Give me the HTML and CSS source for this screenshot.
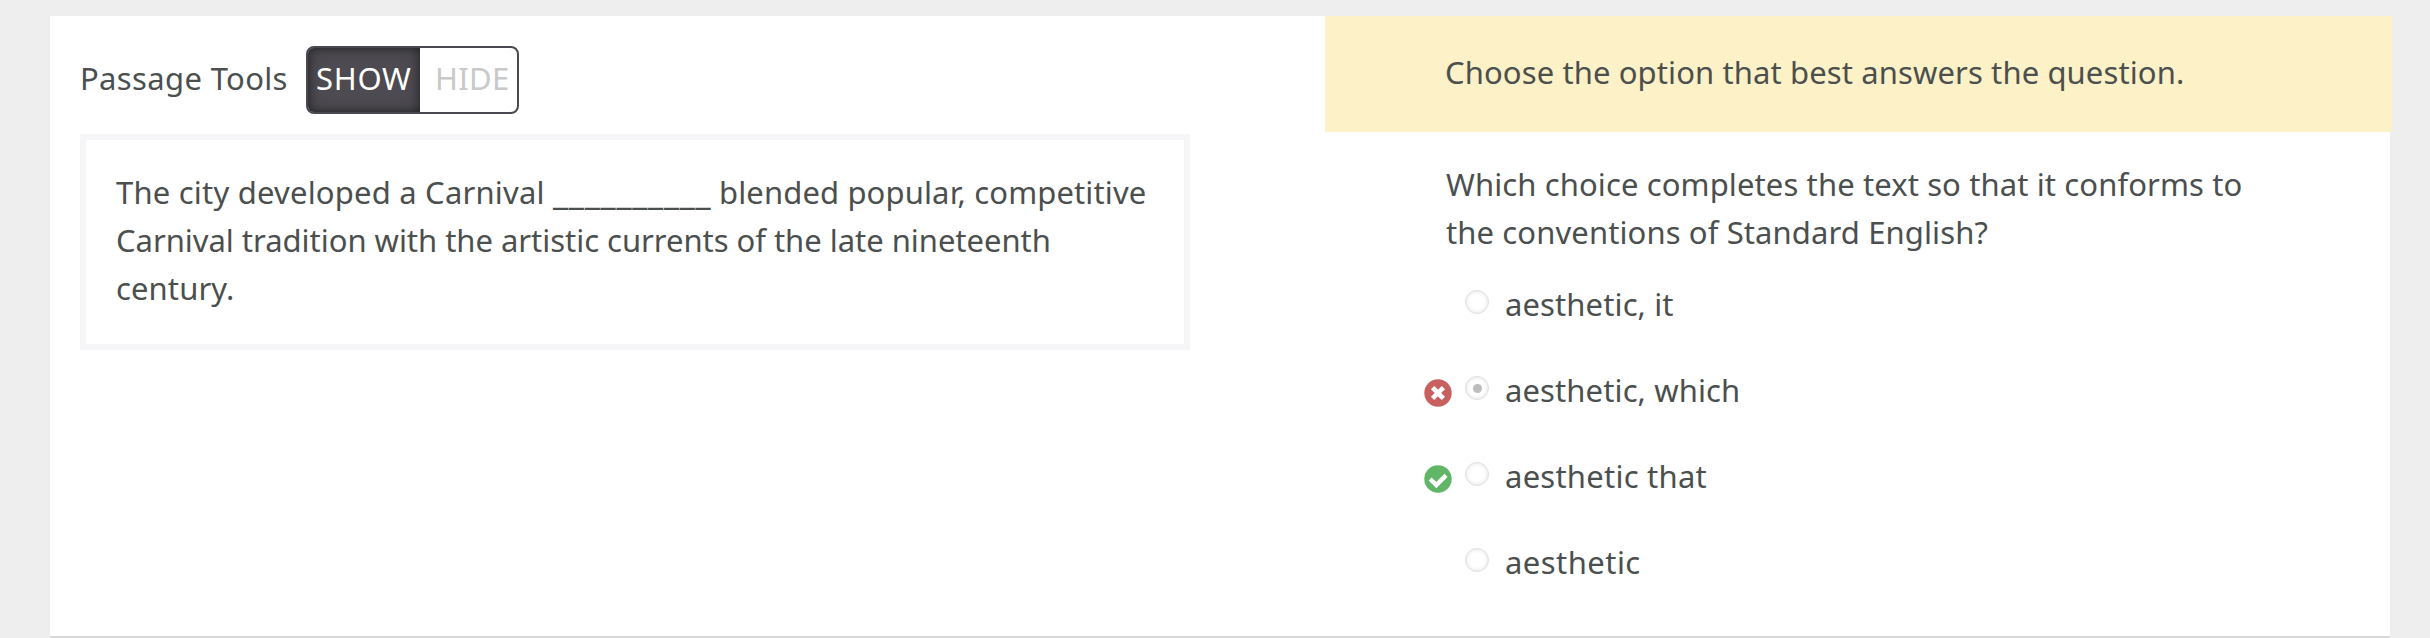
FILE: index.html
```
<!DOCTYPE html>
<html lang="en">
<head>
<meta charset="utf-8">
<title>Passage question</title>
<link rel="stylesheet" href="styles.css">
</head>
<body>
<main class="card">
  <section class="passage">
    <div class="tools">
      <span class="tools-label">Passage Tools</span>
      <div class="toggle">
        <span class="toggle-option toggle-show">SHOW</span>
        <span class="toggle-option toggle-hide">HIDE</span>
      </div>
    </div>
    <div class="passage-box">
      <div class="line line-split">
        <span class="lead">The city developed a Carnival</span>
        <span class="blank">__________</span>
        <span class="tail">blended popular, competitive</span>
      </div>
      <div class="line line-second">Carnival tradition with the artistic currents of the late nineteenth</div>
      <div class="line">century.</div>
    </div>
  </section>
  <section class="question">
    <div class="directions">Choose the option that best answers the question.</div>
    <div class="prompt">
      <div class="line">Which choice completes the text so that it conforms to</div>
      <div class="line">the conventions of Standard English?</div>
    </div>
    <div class="options">
      <div class="option">
        <span class="mark"></span>
        <span class="radio"></span>
        <span class="answer">aesthetic, it</span>
      </div>
      <div class="option">
        <span class="mark">
          <svg class="mark-icon" viewBox="0 0 28 28"><circle cx="14" cy="14" r="13.7" fill="#c96060"/><path d="M10.2 10.2l7.6 7.6M17.8 10.2l-7.6 7.6" stroke="#fff" stroke-width="4.6" stroke-linecap="square"/></svg>
        </span>
        <span class="radio radio-on"></span>
        <span class="answer">aesthetic, which</span>
      </div>
      <div class="option">
        <span class="mark">
          <svg class="mark-icon" viewBox="0 0 28 28"><circle cx="14" cy="14" r="13.7" fill="#60b566"/><path d="M6.2 14l6.1 6.1 9.7-9.7" fill="none" stroke="#fff" stroke-width="4.4"/></svg>
        </span>
        <span class="radio"></span>
        <span class="answer answer-that">aesthetic that</span>
      </div>
      <div class="option">
        <span class="mark"></span>
        <span class="radio"></span>
        <span class="answer answer-last">aesthetic</span>
      </div>
    </div>
  </section>
</main>
</body>
</html>
```

FILE: styles.css
```
* { box-sizing: border-box; }
body {
  margin: 0;
  height: 638px;
  padding: 16px 40px 0 50px;
  overflow: hidden;
  background: #eeeeee;
  color: #4b4f4e;
  font: 31px/48px "Noto Sans", sans-serif;
  letter-spacing: 0.11px;
  white-space: nowrap;
}
.card {
  display: flex;
  height: 622px;
  background: #fff;
  border-bottom: 2px solid #d8d8d8;
}
.passage { flex: none; width: 1275px; padding: 30px 0 0 30px; }
.tools { display: flex; height: 68px; gap: 20px; }
.tools-label { width: 206px; padding-top: 8px; letter-spacing: 0.35px; }
.toggle {
  display: flex;
  width: 213px;
  height: 68px;
  border: 2px solid #4b494f;
  border-radius: 8px;
  overflow: hidden;
  background: #fff;
}
.toggle-option { padding-top: 6px; }
.toggle-show {
  width: 112px;
  padding-left: 8px;
  background: #4d4b51;
  box-shadow: inset 0 0 12px #1c1c1f;
  color: #fff;
  letter-spacing: 0.7px;
}
.toggle-hide { padding-left: 15px; color: #c9c9c9; letter-spacing: 0.3px; }
.passage-box {
  width: 1110px;
  height: 216px;
  margin-top: 20px;
  padding: 28px 0 0 30px;
  border: 6px solid #f6f6f9;
}
.line { height: 48px; }
.line-split { display: flex; }
.lead { width: 437px; letter-spacing: 0.2px; }
.blank {
  width: 166px;
  font-size: 34px;
  letter-spacing: 0.75px;
}
.tail { letter-spacing: 0.13px; }
.line-second { letter-spacing: -0.03px; }
.question { width: 1067px; flex: none; }
.directions {
  height: 116px;
  padding: 32px 0 0 120px;
  background: #fdf2c7;
}
.prompt { padding: 28px 0 0 121px; }
.options { padding: 24px 0 0 99px; }
.option { display: flex; height: 86px; }
.mark { width: 28px; margin-right: 13px; padding-top: 13px; }
.mark-icon { display: block; width: 28px; height: 28px; }
.radio {
  display: flex;
  align-items: center;
  justify-content: center;
  width: 24px;
  height: 24px;
  margin-top: 10px;
  border: 1px solid #dedede;
  border-radius: 50%;
  box-shadow: inset 0 0 4px rgba(0, 0, 0, 0.13);
}
.radio-on::after {
  content: "";
  width: 9px;
  height: 9px;
  border-radius: 50%;
  background: #bdbdbd;
}
.answer { padding-left: 16px; }
.answer-that { letter-spacing: 0.24px; }
.answer-last { letter-spacing: 0.45px; }
```
